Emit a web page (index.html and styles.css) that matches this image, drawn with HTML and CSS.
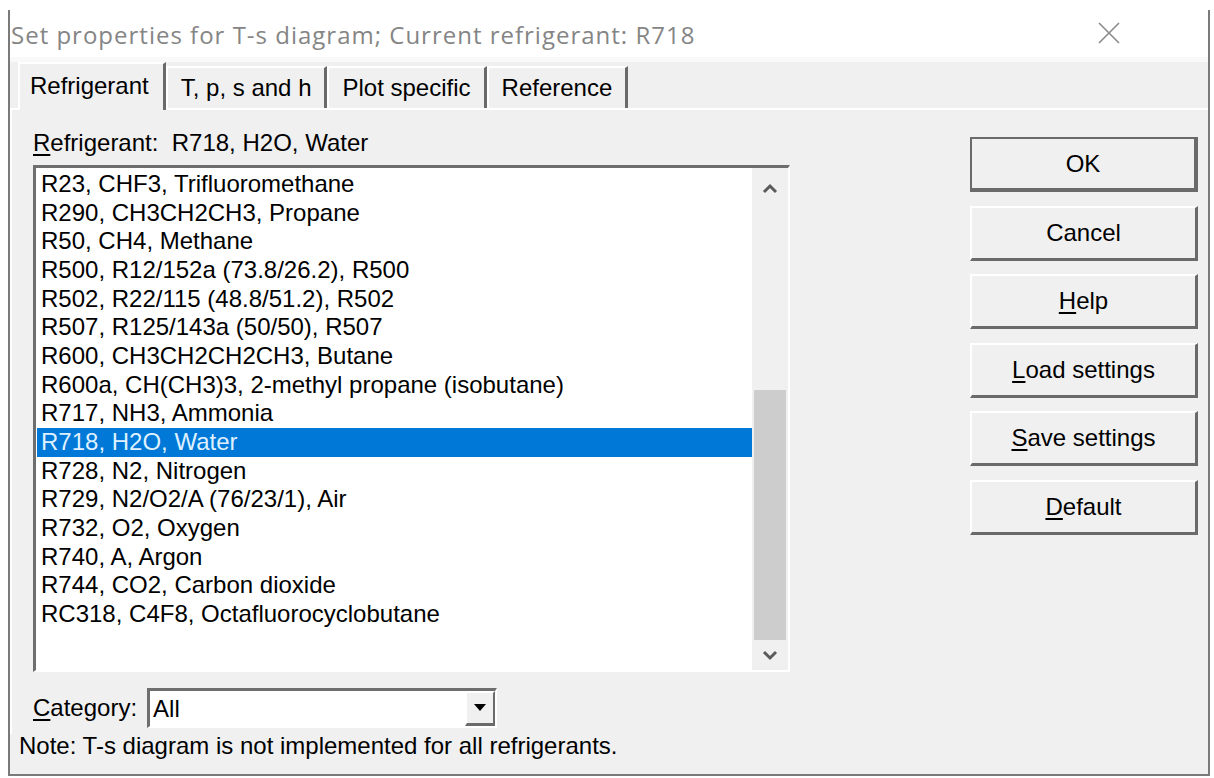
FILE: index.html
```html
<!DOCTYPE html>
<html lang="en">
<head>
<meta charset="utf-8">
<title>Set properties for T-s diagram</title>
<link rel="stylesheet" href="styles.css">
</head>
<body>
<div class="window">
  <div class="titlebar">
    <span class="title">Set properties for T-s diagram; Current refrigerant: R718</span>
    <svg class="close" width="22" height="22" viewBox="0 0 22 22"><path d="M1 1 L21 21 M21 1 L1 21" stroke="#8a8a8a" stroke-width="1.6" fill="none"/></svg>
  </div>
  <div class="strip"></div>
  <div class="tabs">
    <div class="tab active">Refrigerant</div>
    <div class="tab">T, p, s and h</div>
    <div class="tab">Plot specific</div>
    <div class="tab">Reference</div>
  </div>
  <div class="panel">
    <div class="left">
      <div class="label"><u>R</u>efrigerant:&nbsp; R718, H2O, Water</div>
      <div class="listbox">
        <ul class="items">
          <li>R23, CHF3, Trifluoromethane</li>
          <li>R290, CH3CH2CH3, Propane</li>
          <li>R50, CH4, Methane</li>
          <li>R500, R12/152a (73.8/26.2), R500</li>
          <li>R502, R22/115 (48.8/51.2), R502</li>
          <li>R507, R125/143a (50/50), R507</li>
          <li>R600, CH3CH2CH2CH3, Butane</li>
          <li>R600a, CH(CH3)3, 2-methyl propane (isobutane)</li>
          <li>R717, NH3, Ammonia</li>
          <li class="selected">R718, H2O, Water</li>
          <li>R728, N2, Nitrogen</li>
          <li>R729, N2/O2/A (76/23/1), Air</li>
          <li>R732, O2, Oxygen</li>
          <li>R740, A, Argon</li>
          <li>R744, CO2, Carbon dioxide</li>
          <li>RC318, C4F8, Octafluorocyclobutane</li>
        </ul>
        <div class="scrollbar">
          <svg class="arrow" width="16" height="12" viewBox="0 0 16 12"><path d="M2 10 L8 4 L14 10" stroke="#5a5a5a" stroke-width="3" fill="none"/></svg>
          <div class="track"><div class="thumb"></div></div>
          <svg class="arrow" width="16" height="12" viewBox="0 0 16 12"><path d="M2 2 L8 8 L14 2" stroke="#5a5a5a" stroke-width="3" fill="none"/></svg>
        </div>
      </div>
      <div class="category">
        <span class="cat-label"><u>C</u>ategory:</span>
        <div class="combo">
          <span class="combo-text">All</span>
          <div class="drop"><svg width="12" height="8" viewBox="0 0 12 8"><path d="M0 0 H12 L6 7 Z" fill="#000"/></svg></div>
        </div>
      </div>
    </div>
    <div class="buttons">
      <div class="btn default">OK</div>
      <div class="btn">Cancel</div>
      <div class="btn"><u>H</u>elp</div>
      <div class="btn"><u>L</u>oad settings</div>
      <div class="btn"><u>S</u>ave settings</div>
      <div class="btn"><u>D</u>efault</div>
    </div>
  </div>
  <div class="note">Note: T-s diagram is not implemented for all refrigerants.</div>
</div>
</body>
</html>
```

FILE: styles.css
```css
html, body {
  margin: 0;
  padding: 0;
  background: #ffffff;
}

body {
  width: 1214px;
  height: 778px;
  overflow: hidden;
  font-family: "Liberation Sans", Arial, sans-serif;
  font-size: 24px;
  color: #000;
}

u {
  text-decoration: underline;
  text-underline-offset: 3px;
  text-decoration-thickness: 2px;
}

.window {
  margin: 10px 0 0 8px;
  width: 1198px;
  height: 764px;
  border: 2px solid #7a7a7a;
  border-top: none;
  background: #f0f0f0;
  display: flex;
  flex-direction: column;
}

/* caption bar */
.titlebar {
  height: 47px;
  background: #ffffff;
  display: flex;
  align-items: center;
  justify-content: space-between;
  padding: 0 88px 0 1px;
}

.title {
  font-family: "Open Sans", "Noto Sans", sans-serif;
  font-size: 24px;
  color: #858585;
  letter-spacing: 1px;
  margin-top: 2px;
}

.close {
  margin-top: -2px;
}

.strip {
  height: 5px;
  background: #f9f9f9;
}

/* tab headers */
.tabs {
  display: flex;
  height: 46px;
  padding-left: 8px;
  align-items: flex-end;
}

.tab {
  height: 42px;
  line-height: 40px;
  padding: 0 13px 0 13px;
  border-top: 2px solid #ffffff;
  border-left: 2px solid #ffffff;
  border-right: 3px solid #6a6a6a;
  box-sizing: border-box;
}

.tab.active {
  height: 48px;
  margin-bottom: -2px;
  padding: 0 14px 0 10px;
  position: relative;
  z-index: 1;
  background: #f0f0f0;
  line-height: 44px;
}

/* tab page */
.panel {
  flex: 1;
  display: flex;
  justify-content: space-between;
  border-top: 2px solid #ffffff;
  border-left: 2px solid #ffffff;
  padding: 19px 10px 0 21px;
}

.left {
  display: flex;
  flex-direction: column;
}

.label {
  height: 36px;
  line-height: 28px;
}

.listbox {
  width: 757px;
  height: 507px;
  box-sizing: border-box;
  border-top: 3px solid #6e6e6e;
  border-left: 3px solid #6e6e6e;
  border-right: 2px solid #ffffff;
  border-bottom: 2px solid #ffffff;
  background: #ffffff;
  display: flex;
}

.items {
  list-style: none;
  margin: 0;
  padding: 2px 0 0 1px;
  flex: 1;
}

.items li {
  height: 28.67px;
  line-height: 28.67px;
  padding-left: 4px;
  white-space: nowrap;
}

.items li.selected {
  background: #0078d7;
  color: #dff1ff;
}

.scrollbar {
  width: 36px;
  background: #f0f0f0;
  display: flex;
  flex-direction: column;
  align-items: center;
  padding: 14px 0 8px;
  box-sizing: border-box;
}

.arrow {
  flex: none;
}

.track {
  flex: 1;
  width: 100%;
  display: flex;
  flex-direction: column;
  justify-content: flex-end;
  padding: 0 2px 10px;
  box-sizing: border-box;
}

.thumb {
  height: 250px;
  background: #cdcdcd;
}

/* category selector */
.category {
  display: flex;
  align-items: center;
  margin-top: 16px;
  gap: 10px;
}

.combo {
  width: 350px;
  height: 40px;
  box-sizing: border-box;
  border-top: 3px solid #6e6e6e;
  border-left: 3px solid #6e6e6e;
  border-right: 2px solid #ffffff;
  border-bottom: 2px solid #ffffff;
  background: #ffffff;
  display: flex;
  align-items: center;
  justify-content: space-between;
}

.combo-text {
  padding-left: 3px;
}

.drop {
  width: 30px;
  height: 35px;
  box-sizing: border-box;
  background: #f0f0f0;
  border-top: 2px solid #ffffff;
  border-left: 2px solid #ffffff;
  border-right: 2px solid #6a6a6a;
  border-bottom: 3px solid #6a6a6a;
  display: flex;
  align-items: center;
  justify-content: center;
}

/* command buttons */
.buttons {
  display: flex;
  flex-direction: column;
  gap: 13.6px;
  padding-top: 8px;
}

.btn {
  width: 228px;
  height: 55px;
  box-sizing: border-box;
  background: #f0f0f0;
  border-top: 2px solid #ffffff;
  border-left: 2px solid #ffffff;
  border-right: 3px solid #6a6a6a;
  border-bottom: 3px solid #6a6a6a;
  display: flex;
  align-items: center;
  justify-content: center;
}

.btn.default {
  border: 2px solid #6a6a6a;
  border-right-width: 4px;
  border-bottom-width: 4px;
}

.note {
  height: 40px;
  line-height: 24px;
  padding-left: 9px;
}
```
